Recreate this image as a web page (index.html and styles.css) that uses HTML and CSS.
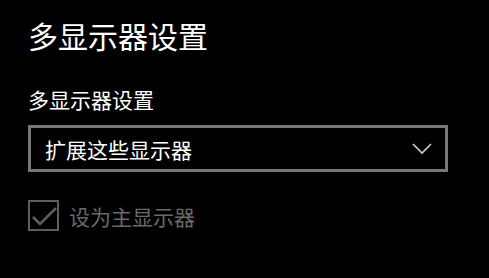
FILE: index.html
```html
<!DOCTYPE html>
<html lang="zh-CN">
    <head>
        <meta charset="utf-8">
        <link rel="stylesheet" href="styles.css">
    </head>
    <body>
        <h1 class="title">多显示器设置</h1>
        <div class="field">
            <label class="field-label" for="mode">多显示器设置</label>
            <div class="select" id="mode">
                <span class="select-value">扩展这些显示器</span>
                <svg class="chevron" width="20" height="12" viewBox="0 0 20 12">
                    <polyline points="1,1 10,10 19,1" fill="none" stroke="#d0d0d0" stroke-width="1.6"/>
                </svg>
            </div>
        </div>
        <div class="check disabled">
            <span class="check-box">
                <svg width="26" height="26" viewBox="0 0 26 26">
                    <polyline points="2,14 9,21 25,5" fill="none" stroke="#5e5e5e" stroke-width="2.6"/>
                </svg>
            </span>
            <span class="check-label">设为主显示器</span>
        </div>
    </body>
</html>
```

FILE: styles.css
```css
* {
    margin: 0;
    padding: 0;
    box-sizing: border-box;
}
:root {
    --bg-color: #000;
    --fg-color: #fff;
    --border-color: #777;
    --disabled-color: #5e5e5e;
}
html {
    font-family: "Noto Sans CJK SC", "Noto Sans", sans-serif;
    background-color: var(--bg-color);
    color: var(--fg-color);
}
body {
    padding: 16px 28px 0;
}
.title {
    font-size: 30px;
    font-weight: normal;
    line-height: 39px;
}
.field {
    margin-top: 30px;
}
.field-label {
    display: block;
    font-size: 21px;
    line-height: 28px;
}
.select {
    margin-top: 12px;
    width: 420px;
    height: 47px;
    border: 3px solid var(--border-color);
    display: flex;
    align-items: center;
    justify-content: space-between;
    padding: 0 13px 0 14px;
}
.select-value {
    font-size: 21px;
    line-height: 28px;
}
.chevron {
    display: block;
}
.check {
    margin-top: 28px;
    display: flex;
    align-items: center;
    gap: 10px;
}
.check-box {
    width: 31px;
    height: 31px;
    border: 2px solid var(--disabled-color);
    display: flex;
    align-items: center;
    justify-content: center;
}
.check-box svg {
    display: block;
}
.check-label {
    font-size: 21px;
    line-height: 28px;
    color: #6a6a6a;
}
```
